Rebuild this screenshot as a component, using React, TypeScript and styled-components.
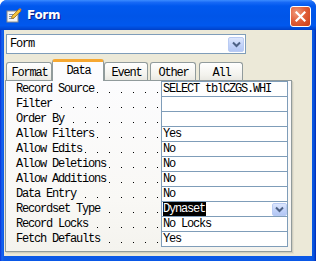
import React from "react";
import styled, { createGlobalStyle } from "styled-components";

const Global = createGlobalStyle`
  html, body { margin: 0; padding: 0; background: #fff; }
  body { width: 316px; height: 261px; overflow: hidden; }
`;

const MONO = `"Liberation Mono", "DejaVu Sans Mono", monospace`;
const CHAR = 6;

const Window = styled.div`
  width: 316px;
  height: 261px;
  box-sizing: border-box;
  display: flex;
  flex-direction: column;
  background: linear-gradient(90deg, #0831d9 0px, #1665f0 2px, #0a58e6 4px, #0a58e6 312px, #0852d8 314px, #0028b8 316px);
  border-radius: 7px 7px 0 0;
  overflow: hidden;
`;

const TitleBar = styled.div`
  height: 30px;
  flex: none;
  display: flex;
  align-items: center;
  padding: 0 5px 0 6px;
  box-sizing: border-box;
  background: linear-gradient(
    #3b8cff 0%,
    #1769f6 8%,
    #0058ee 20%,
    #0055e8 55%,
    #0058ee 85%,
    #0049d6 95%,
    #0040c8 100%
  );
`;

const TitleText = styled.span`
  margin-left: 5px;
  flex: 1;
  font-family: "DejaVu Sans", "Liberation Sans", sans-serif;
  font-weight: bold;
  font-size: 12px;
  letter-spacing: -0.3px;
  color: #fff;
  text-shadow: 1px 1px 0 #0a1883;
  line-height: 14px;
`;

const CloseButton = styled.div`
  width: 21px;
  height: 21px;
  box-sizing: border-box;
  border: 1px solid #fff;
  border-radius: 3px;
  background: radial-gradient(circle at 30% 30%, #f09a7c 0%, #e2603a 45%, #c83c14 100%);
  display: flex;
  align-items: center;
  justify-content: center;
  margin-top: 2px;
`;

const Body = styled.div`
  flex: 1;
  margin: 0 4px 5px 4px;
  background: #ece9d8;
  display: flex;
  flex-direction: column;
  padding-top: 4px;
`;

const Combo = styled.div`
  margin-left: 2px;
  width: 240px;
  height: 20px;
  box-sizing: border-box;
  border: 1px solid #7f9db9;
  background: #fff;
  display: flex;
  align-items: center;
  padding: 0 1px 0 3px;
`;

const MonoText = styled.span`
  font-family: ${MONO};
  font-size: 12px;
  letter-spacing: -1.2px;
  color: #000;
  line-height: 14px;
  white-space: pre;
`;

const ComboText = styled(MonoText)`
  flex: 1;
`;

const DropButton = styled.div<{ $w: number; $h: number }>`
  width: ${(p) => p.$w}px;
  height: ${(p) => p.$h}px;
  box-sizing: border-box;
  border: 1px solid #b9cbf3;
  border-radius: 2px;
  background: linear-gradient(#dce6fd, #c0d1f8 60%, #b3c7f4);
  display: flex;
  align-items: center;
  justify-content: center;
  flex: none;
`;

const TabStrip = styled.div`
  margin-top: 5px;
  margin-left: 2px;
  height: 21px;
  display: flex;
  align-items: flex-end;
  position: relative;
  z-index: 1;
`;

const Tab = styled.div<{ $w: number; $ml: number; $active?: boolean }>`
  width: ${(p) => p.$w}px;
  margin-left: ${(p) => p.$ml}px;
  box-sizing: border-box;
  height: ${(p) => (p.$active ? 22 : 18)}px;
  margin-bottom: ${(p) => (p.$active ? -1 : 0)}px;
  border: 1px solid #919b9c;
  border-bottom: none;
  border-top: ${(p) => (p.$active ? "3px solid #f6a832" : "1px solid #919b9c")};
  border-radius: 3px 3px 0 0;
  background: ${(p) => (p.$active ? "#fcfcfe" : "linear-gradient(#fff, #f3f2ed 70%, #e9e8e2)")};
  font-family: ${MONO};
  font-size: 12px;
  letter-spacing: -1.2px;
  color: #000;
  line-height: 14px;
  text-align: center;
  padding-top: ${(p) => (p.$active ? 2 : 3)}px;
  padding-left: 1px;
`;

const Panel = styled.div`
  margin-left: 1px;
  width: 287px;
  height: 172px;
  box-sizing: border-box;
  border: 1px solid #919b9c;
  background: linear-gradient(#fcfcfe, #f9f8f5 70%, #f4f3ee);
  box-shadow: 1px 1px 0 #d0cebf, 2px 2px 0 #e3e0d0;
`;

const Grid = styled.div`
  display: grid;
  grid-template-columns: 155px 127px;
`;

const Label = styled.div`
  height: 15px;
  box-sizing: border-box;
  padding: 1px 0 0 10px;
  display: flex;
  overflow: hidden;
`;

const Leader = styled.span`
  flex: 1;
  margin-left: 2px;
  margin-top: -1px;
  height: 15px;
  background-image: linear-gradient(90deg, #000 1px, transparent 1px);
  background-size: 12px 1px;
  background-repeat: repeat-x;
`;

const Cell = styled.div<{ $last?: boolean }>`
  height: ${(p) => (p.$last ? 16 : 15)}px;
  box-sizing: border-box;
  border: 1px solid #7f9db9;
  border-bottom: ${(p) => (p.$last ? "1px solid #7f9db9" : "none")};
  background: #fff;
  display: flex;
  align-items: flex-start;
  padding-left: 1px;
  overflow: hidden;
`;

const CellText = styled(MonoText)`
  flex: 1;
`;

const Selected = styled.span`
  background: #000;
  color: #fff;
  padding-right: 1px;
`;

const CellDrop = styled.div`
  margin-top: 1px;
  flex: none;
`;

const Chevron = () => (
  <svg width="9" height="7" viewBox="0 0 9 7">
    <path d="M1 1.5 L4.5 5 L8 1.5" fill="none" stroke="#4d6185" strokeWidth="2" />
  </svg>
);

const FormIcon = () => (
  <svg width="16" height="16" viewBox="0 0 16 16">
    <rect x="1" y="4" width="11" height="11" fill="#f4f4f4" stroke="#8c8c8c" />
    <rect x="3" y="7" width="7" height="1" fill="#7a8fb0" />
    <rect x="3" y="9" width="7" height="1" fill="#7a8fb0" />
    <rect x="3" y="11" width="5" height="1" fill="#7a8fb0" />
    <path d="M6 9 L13 2 L15 4 L8 11 L5.5 11.5 Z" fill="#f2c23c" stroke="#a0721a" strokeWidth="0.8" />
    <path d="M13 2 L15 4 L15.5 2.5 L14 1 Z" fill="#e3842f" />
  </svg>
);

const CloseX = () => (
  <svg width="11" height="11" viewBox="0 0 11 11">
    <path d="M1.5 1.5 L9.5 9.5 M9.5 1.5 L1.5 9.5" stroke="#fff" strokeWidth="2.2" strokeLinecap="square" />
  </svg>
);

// Leader dots sit on a fixed 12px grid (cell offset 7 + 12k), whatever the label length.
const leaderOffset = (label: string) => {
  const start = 10 + label.length * CHAR + 2;
  return (((7 - start) % 12) + 12) % 12;
};

type Row = { label: string; value: string; select?: boolean };

const rows: Row[] = [
  { label: "Record Source", value: "SELECT tblCZGS.WHI" },
  { label: "Filter", value: "" },
  { label: "Order By", value: "" },
  { label: "Allow Filters", value: "Yes" },
  { label: "Allow Edits", value: "No" },
  { label: "Allow Deletions", value: "No" },
  { label: "Allow Additions", value: "No" },
  { label: "Data Entry", value: "No" },
  { label: "Recordset Type", value: "Dynaset", select: true },
  { label: "Record Locks", value: "No Locks" },
  { label: "Fetch Defaults", value: "Yes" },
];

const tabs = [
  { name: "Format", w: 46, ml: 0 },
  { name: "Data", w: 52, ml: 0, active: true },
  { name: "Event", w: 44, ml: 0 },
  { name: "Other", w: 46, ml: 2 },
  { name: "All", w: 44, ml: 3 },
];

export default function App() {
  return (
    <>
      <Global />
      <Window>
        <TitleBar>
          <FormIcon />
          <TitleText>Form</TitleText>
          <CloseButton>
            <CloseX />
          </CloseButton>
        </TitleBar>
        <Body>
          <Combo>
            <ComboText>Form</ComboText>
            <DropButton $w={16} $h={15}>
              <Chevron />
            </DropButton>
          </Combo>
          <TabStrip>
            {tabs.map((t) => (
              <Tab key={t.name} $w={t.w} $ml={t.ml} $active={t.active}>
                {t.name}
              </Tab>
            ))}
          </TabStrip>
          <Panel>
            <Grid>
              {rows.map((r, i) => (
                <React.Fragment key={r.label}>
                  <Label>
                    <MonoText>{r.label}</MonoText>
                    <Leader style={{ backgroundPosition: `${leaderOffset(r.label)}px 11px` }} />
                  </Label>
                  <Cell $last={i === rows.length - 1}>
                    <CellText>{r.select ? <Selected>{r.value}</Selected> : r.value}</CellText>
                    {r.select && (
                      <CellDrop>
                        <DropButton $w={15} $h={13}>
                          <Chevron />
                        </DropButton>
                      </CellDrop>
                    )}
                  </Cell>
                </React.Fragment>
              ))}
            </Grid>
          </Panel>
        </Body>
      </Window>
    </>
  );
}
